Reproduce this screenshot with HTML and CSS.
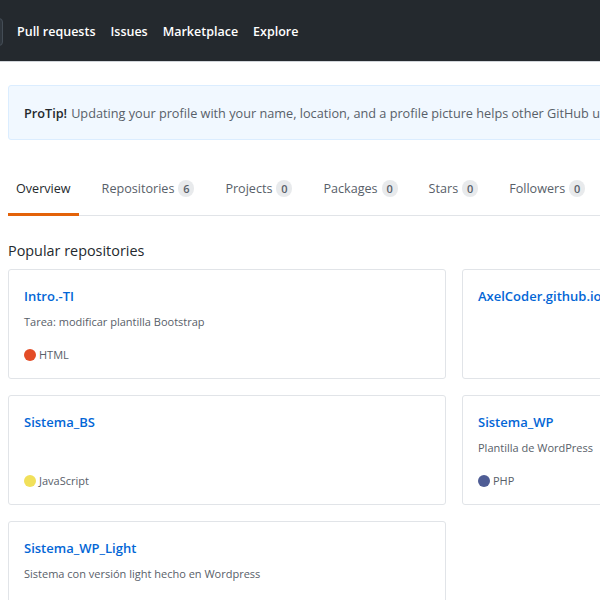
FILE: index.html
```html
<!DOCTYPE html>
<html>
<head>
<meta charset="utf-8">
<link rel="stylesheet" href="styles.css">
</head>
<body>
<header class="header">
  <div class="search"></div>
  <nav class="nav">
    <a>Pull requests</a>
    <a>Issues</a>
    <a>Marketplace</a>
    <a>Explore</a>
  </nav>
</header>
<main class="main">
  <div class="protip"><b>ProTip!</b> Updating your profile with your name, location, and a profile picture helps other GitHub users get to know you.</div>
  <div class="tabs">
    <a class="tab active">Overview</a>
    <a class="tab">Repositories <span class="counter">6</span></a>
    <a class="tab">Projects <span class="counter">0</span></a>
    <a class="tab">Packages <span class="counter">0</span></a>
    <a class="tab">Stars <span class="counter">0</span></a>
    <a class="tab">Followers <span class="counter">0</span></a>
    <a class="tab">Following <span class="counter">0</span></a>
  </div>
  <h2 class="section-title">Popular repositories</h2>
  <div class="grid">
    <div class="card">
      <a class="repo">Intro.-TI</a>
      <p class="desc">Tarea: modificar plantilla Bootstrap</p>
      <div class="lang"><span class="dot html"></span>HTML</div>
    </div>
    <div class="card">
      <a class="repo">AxelCoder.github.io</a>
      <p class="desc"></p>
      <div class="lang"></div>
    </div>
    <div class="card">
      <a class="repo">Sistema_BS</a>
      <p class="desc"></p>
      <div class="lang"><span class="dot js"></span>JavaScript</div>
    </div>
    <div class="card">
      <a class="repo">Sistema_WP</a>
      <p class="desc">Plantilla de WordPress</p>
      <div class="lang"><span class="dot php"></span>PHP</div>
    </div>
    <div class="card">
      <a class="repo">Sistema_WP_Light</a>
      <p class="desc">Sistema con versión light hecho en Wordpress</p>
      <div class="lang"></div>
    </div>
  </div>
</main>
</body>
</html>
```
FILE: styles.css
```css
html, body {
  margin: 0;
  padding: 0;
  background: #fff;
  overflow: hidden;
}
body {
  font-family: "Open Sans", "Noto Sans", sans-serif;
  color: #24292e;
  width: 600px;
  height: 600px;
}
.header {
  height: 62px;
  background: #24292e;
  display: flex;
  align-items: center;
  border-bottom: 1px solid #d1d5da;
  box-sizing: border-box;
  padding-top: 2px;
}
.search {
  width: 300px;
  height: 28px;
  margin-left: -297px;
  flex: none;
  background: #2f363d;
  border: 1px solid #444d56;
  border-radius: 4px;
  box-sizing: border-box;
}
.nav {
  display: flex;
  gap: 15px;
  margin-left: 14px;
  white-space: nowrap;
}
.nav a {
  color: #fff;
  font-weight: 600;
  font-size: 12.5px;
}
.main {
  width: 900px;
  padding: 23px 0 0 8px;
}
.protip {
  height: 55px;
  box-sizing: border-box;
  background: #f1f8ff;
  border: 1px solid #dbedff;
  border-radius: 3px;
  padding: 0 15px;
  display: flex;
  align-items: center;
  font-size: 12.7px;
  color: #586069;
  white-space: nowrap;
  overflow: hidden;
}
.protip b {
  color: #24292e;
  font-weight: 600;
  margin-right: 4px;
}
.tabs {
  margin-top: 31px;
  display: flex;
  gap: 15px;
  border-bottom: 1px solid #e1e4e8;
  white-space: nowrap;
}
.tab {
  font-size: 12.6px;
  color: #586069;
  padding: 9px 8px 0;
  height: 45px;
  box-sizing: border-box;
  border-bottom: 2px solid transparent;
  margin-bottom: -1px;
  display: flex;
  align-items: flex-start;
  gap: 4px;
}
.tab.active {
  color: #24292e;
  border-bottom: 3px solid #e36209;
}
.counter {
  display: inline-block;
  font-size: 11px;
  font-weight: 600;
  line-height: 17px;
  min-width: 16px;
  text-align: center;
  background: rgba(209, 213, 218, 0.5);
  border-radius: 9px;
  color: #586069;
}
.section-title {
  font-size: 14.4px;
  font-weight: 400;
  margin: 25px 0 9px;
  color: #24292e;
}
.grid {
  display: grid;
  grid-template-columns: 438px 438px;
  gap: 16px;
}
.card {
  height: 110px;
  box-sizing: border-box;
  border: 1px solid #e1e4e8;
  border-radius: 3px;
  padding: 16px 15px 0;
  display: flex;
  flex-direction: column;
}
.repo {
  color: #0366d6;
  font-weight: 600;
  font-size: 13px;
  line-height: 20px;
}
.desc {
  margin: 7px 0 0;
  font-size: 11px;
  line-height: 18px;
  height: 18px;
  color: #586069;
}
.lang {
  margin-top: 15px;
  font-size: 11px;
  color: #586069;
  display: flex;
  align-items: center;
  gap: 3px;
  line-height: 18px;
}
.dot {
  width: 12px;
  height: 12px;
  border-radius: 50%;
  display: inline-block;
}
.dot.html { background: #e34c26; }
.dot.js { background: #f1e05a; }
.dot.php { background: #4f5d95; }
```
